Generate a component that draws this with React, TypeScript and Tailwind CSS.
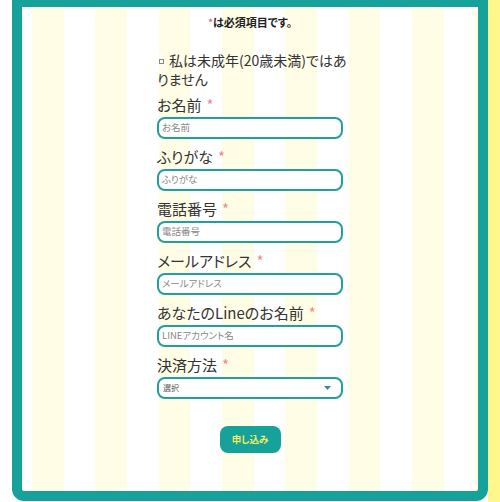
import React from "react";

const fields = [
  { label: "お名前", ph: "お名前" },
  { label: "ふりがな", ph: "ふりがな" },
  { label: "電話番号", ph: "電話番号" },
  { label: "メールアドレス", ph: "メールアドレス" },
  { label: "あなたのLineのお名前", ph: "LINEアカウント名" },
];

function Label({ text, first }: { text: string; first?: boolean }) {
  return (
    <div
      className={`${first ? "mt-[3px]" : "mt-[5px]"} h-[25px] leading-[25px] text-[15px] text-[#333] whitespace-nowrap`}
    >
      {text}
      <span className="ml-[5px] text-[#ee8a8a]">*</span>
    </div>
  );
}

export default function App() {
  return (
    <div
      className="flex w-[500px] h-[502px] overflow-hidden bg-white [font-feature-settings:'palt']"
      style={{ fontFamily: '"Noto Sans CJK JP", "Noto Sans", sans-serif' }}
    >
      <div className="w-[12px] shrink-0 bg-white" />
      <div className="w-[476px] h-[501px] shrink-0 border-x-[10px] border-t-[7px] border-b-[10px] border-[#17a19b] rounded-b-[12px] bg-[repeating-linear-gradient(90deg,#ffffff_0px,#ffffff_10px,#fffde6_10px,#fffde6_41.67px,#ffffff_41.67px,#ffffff_63.33px)] flex flex-col items-center">
        <div className="mt-[7px] h-[16px] leading-[16px] text-[11px] font-bold text-[#222]">
          <span className="text-[#e0504a] font-normal">*</span>は必須項目です。
        </div>
        <div className="w-[186px] flex flex-col">
          <div className="mt-[21px] text-[14px] leading-[19px] text-[#333] whitespace-nowrap">
            <span className="inline-block w-[5px] h-[5px] border border-[#888] ml-[2px] mr-[5px] align-middle relative top-[-1px]" />
            私は未成年(20歳未満)ではあ
            <br />
            りません
          </div>
          {fields.map((f, i) => (
            <React.Fragment key={f.label}>
              <Label text={f.label} first={i === 0} />
              <div className="h-[22px] border-2 border-[#22a09a] rounded-[8px] bg-white flex items-center px-[3px]">
                <span className="text-[9.5px] text-[#888] leading-none">{f.ph}</span>
              </div>
            </React.Fragment>
          ))}
          <Label text="決済方法" />
          <div className="h-[22px] border-2 border-[#22a09a] rounded-[8px] bg-white flex items-center justify-between pl-[4px] pr-[10px]">
            <span className="text-[8px] text-[#555] leading-none">選択</span>
            <svg width="7" height="4" viewBox="0 0 7 4">
              <polygon points="0,0 7,0 3.5,4" fill="#3a8d8a" />
            </svg>
          </div>
          <div className="mt-[27px] self-center w-[61px] h-[27px] rounded-[8px] bg-[#17a19b] flex items-center justify-center">
            <span className="text-[9.5px] font-bold text-[#f0ef5c] leading-none">申し込み</span>
          </div>
        </div>
      </div>
      <div className="w-[12px] shrink-0 bg-[#fff68c]" />
    </div>
  );
}
